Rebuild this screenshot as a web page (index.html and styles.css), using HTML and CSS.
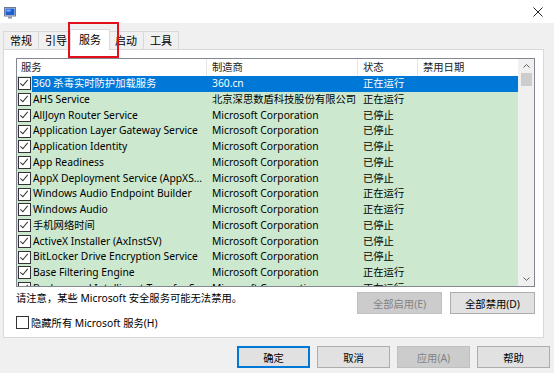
FILE: index.html
```html
<!DOCTYPE html>
<html lang="zh-CN">
<head>
  <meta charset="UTF-8">
  <title>系统配置</title>
  <link rel="stylesheet" href="styles.css">
</head>
<body>
  <div class="window">
    <div class="titlebar">
      <svg class="app-icon" width="12" height="12" viewBox="0 0 12 12">
        <rect x="0.5" y="0.5" width="11" height="8.5" fill="#d8dde6" stroke="#6b7a90"/>
        <rect x="1.5" y="1.5" width="9" height="6.5" fill="#1f5fd0"/>
        <rect x="2.5" y="2.5" width="4" height="2" fill="#7fb2ff"/>
        <rect x="4" y="9.5" width="4" height="2" fill="#8a96a8"/>
      </svg>
      <svg class="close" width="10" height="10" viewBox="0 0 10 10">
        <path d="M0.5 0.5 L9.5 9.5 M9.5 0.5 L0.5 9.5" stroke="#222" stroke-width="1"/>
      </svg>
    </div>

    <div class="tabs">
      <div class="tab">常规</div>
      <div class="tab">引导</div>
      <div class="tab active">服务<span class="highlight"></span></div>
      <div class="tab">启动</div>
      <div class="tab">工具</div>
    </div>

    <div class="panel">
      <div class="list">
        <div class="table">
          <div class="list-head">
            <div class="col name">服务</div>
            <div class="col maker">制造商</div>
            <div class="col status">状态</div>
            <div class="col date">禁用日期</div>
          </div>
          <div class="rows">
            <div class="row selected"><span class="check on"></span><div class="cells"><div class="col name">360 杀毒实时防护加载服务</div><div class="col maker">360.cn</div><div class="col status">正在运行</div><div class="col date"></div></div></div>
            <div class="row"><span class="check on"></span><div class="cells"><div class="col name">AHS Service</div><div class="col maker">北京深思数盾科技股份有限公司</div><div class="col status">正在运行</div><div class="col date"></div></div></div>
            <div class="row"><span class="check on"></span><div class="cells"><div class="col name">AllJoyn Router Service</div><div class="col maker">Microsoft Corporation</div><div class="col status">已停止</div><div class="col date"></div></div></div>
            <div class="row"><span class="check on"></span><div class="cells"><div class="col name">Application Layer Gateway Service</div><div class="col maker">Microsoft Corporation</div><div class="col status">已停止</div><div class="col date"></div></div></div>
            <div class="row"><span class="check on"></span><div class="cells"><div class="col name">Application Identity</div><div class="col maker">Microsoft Corporation</div><div class="col status">已停止</div><div class="col date"></div></div></div>
            <div class="row"><span class="check on"></span><div class="cells"><div class="col name">App Readiness</div><div class="col maker">Microsoft Corporation</div><div class="col status">已停止</div><div class="col date"></div></div></div>
            <div class="row"><span class="check on"></span><div class="cells"><div class="col name">AppX Deployment Service (AppXS...</div><div class="col maker">Microsoft Corporation</div><div class="col status">已停止</div><div class="col date"></div></div></div>
            <div class="row"><span class="check on"></span><div class="cells"><div class="col name">Windows Audio Endpoint Builder</div><div class="col maker">Microsoft Corporation</div><div class="col status">正在运行</div><div class="col date"></div></div></div>
            <div class="row"><span class="check on"></span><div class="cells"><div class="col name">Windows Audio</div><div class="col maker">Microsoft Corporation</div><div class="col status">正在运行</div><div class="col date"></div></div></div>
            <div class="row"><span class="check on"></span><div class="cells"><div class="col name">手机网络时间</div><div class="col maker">Microsoft Corporation</div><div class="col status">已停止</div><div class="col date"></div></div></div>
            <div class="row"><span class="check on"></span><div class="cells"><div class="col name">ActiveX Installer (AxInstSV)</div><div class="col maker">Microsoft Corporation</div><div class="col status">已停止</div><div class="col date"></div></div></div>
            <div class="row"><span class="check on"></span><div class="cells"><div class="col name">BitLocker Drive Encryption Service</div><div class="col maker">Microsoft Corporation</div><div class="col status">已停止</div><div class="col date"></div></div></div>
            <div class="row"><span class="check on"></span><div class="cells"><div class="col name">Base Filtering Engine</div><div class="col maker">Microsoft Corporation</div><div class="col status">正在运行</div><div class="col date"></div></div></div>
            <div class="row"><span class="check on"></span><div class="cells"><div class="col name">Background Intelligent Transfer Service</div><div class="col maker">Microsoft Corporation</div><div class="col status">正在运行</div><div class="col date"></div></div></div>
          </div>
        </div>
        <div class="scrollbar">
          <svg class="arrow" width="7" height="4" viewBox="0 0 7 4"><path d="M0.5 3.5 L3.5 0.5 L6.5 3.5" fill="none" stroke="#606060"/></svg>
          <div class="thumb"></div>
          <div class="track"></div>
          <svg class="arrow" width="7" height="4" viewBox="0 0 7 4"><path d="M0.5 0.5 L3.5 3.5 L6.5 0.5" fill="none" stroke="#606060"/></svg>
        </div>
      </div>

      <div class="list-actions">
        <p class="note">请注意，某些 Microsoft 安全服务可能无法禁用。</p>
        <button class="btn wide" disabled>全部启用(E)</button>
        <button class="btn wide">全部禁用(D)</button>
      </div>

      <label class="hide-ms"><span class="check"></span>隐藏所有 Microsoft 服务(H)</label>
    </div>

    <div class="footer">
      <button class="btn focused">确定</button>
      <button class="btn">取消</button>
      <button class="btn" disabled>应用(A)</button>
      <button class="btn">帮助</button>
    </div>
  </div>
</body>
</html>
```

FILE: styles.css
```css
/* Grundlayout */
body {
  margin: 0;
  padding: 0;
  background-color: #f0f0f0;
  font-family: "Noto Sans", "Noto Sans CJK SC", sans-serif;
  font-size: 10.3px;
  color: #000000;
}

.window {
  width: 554px;
  height: 373px;
  overflow: hidden;
}

/* Titelrad */
.titlebar {
  height: 23px;
  background-color: #ffffff;
  display: flex;
  align-items: center;
  justify-content: space-between;
  padding: 0 11px 0 4px;
}

.app-icon {
  margin-top: 2px;
}

/* Flikar */
.tabs {
  display: flex;
  align-items: flex-end;
  height: 26px;
  padding-left: 3px;
}

.tab {
  height: 17px;
  line-height: 17px;
  padding: 0 6px;
  background-color: #f0f0f0;
  border: 1px solid #d9d9d9;
  border-bottom: none;
  margin-right: -1px;
  font-size: 11px;
}

.tab.active {
  position: relative;
  z-index: 1;
  height: 20px;
  line-height: 20px;
  padding: 0 8px;
  margin: 0 -2px -1px -3px;
  background-color: #ffffff;
}

.tab.active + .tab {
  margin-left: 0;
}

.highlight {
  position: absolute;
  left: -3px;
  top: -8px;
  width: 47px;
  height: 32px;
  border: 2px solid #e3101c;
}

/* Panel */
.panel {
  height: 279px;
  margin: 0 10px 0 3px;
  background-color: #ffffff;
  border: 1px solid #d9d9d9;
  padding: 8px 8px 0 12px;
}

.list {
  display: flex;
  height: 227px;
  border: 1px solid #828790;
  overflow: hidden;
}

.table {
  width: 501px;
}

.list-head {
  display: flex;
  height: 17px;
  line-height: 16px;
  color: #1a1a1a;
}

.list-head .col {
  border-right: 1px solid #e5e5e5;
}

.col {
  flex: none;
  white-space: nowrap;
  overflow: hidden;
  text-overflow: ellipsis;
  box-sizing: border-box;
  padding-left: 5px;
}

.col.name {
  width: 190px;
}

.list-head .col.name {
  padding-left: 4px;
}

.col.maker {
  width: 151px;
}

.col.status {
  width: 60px;
}

.col.date {
  width: 100px;
  border-right: none;
}

.rows {
  background-color: #cce8cf;
}

.row {
  display: flex;
  align-items: center;
  height: 15.75px;
  line-height: 15.75px;
}

.row .check {
  margin: 0 1px 0 1px;
}

.cells {
  display: flex;
  flex: 1;
}

.row .col.name {
  width: 175px;
  padding-left: 1px;
}

.row.selected .cells {
  background-color: #0078d7;
  color: #ffffff;
}

/* Kryssrutor */
.check {
  flex: none;
  display: inline-block;
  width: 11px;
  height: 11px;
  border: 1px solid #333333;
  background-color: #ffffff;
  box-sizing: content-box;
  position: relative;
}

.check.on::after {
  content: "";
  position: absolute;
  left: 3px;
  top: 0px;
  width: 3px;
  height: 7px;
  border: solid #333333;
  border-width: 0 1px 1px 0;
  transform: rotate(40deg);
}

/* Rullningslist */
.scrollbar {
  width: 17px;
  background-color: #f0f0f0;
  display: flex;
  flex-direction: column;
  align-items: center;
}

.scrollbar .arrow {
  flex: none;
  margin: 5px 0 5px;
}

.thumb {
  width: 11px;
  height: 13px;
  background-color: #cdcdcd;
}

.track {
  flex: 1;
}

/* Knappar under listan */
.list-actions {
  display: flex;
  align-items: flex-start;
  gap: 8px;
  margin-top: 5px;
}

.note {
  flex: 1;
  margin: 0;
  line-height: 13px;
}

.btn {
  width: 73px;
  height: 22px;
  padding: 0;
  font-family: inherit;
  font-size: 10.3px;
  color: #000000;
  background-color: #e1e1e1;
  border: 1px solid #adadad;
}

.btn.wide {
  width: 85px;
}

.btn:disabled {
  color: #838383;
  background-color: #cccccc;
  border-color: #bfbfbf;
}

.btn.focused {
  border-color: #0078d7;
  box-shadow: inset 0 0 0 1px #0078d7;
}

.hide-ms {
  display: flex;
  align-items: center;
  gap: 2px;
  margin-top: 1px;
}

/* Dialogknappar */
.footer {
  display: flex;
  justify-content: flex-end;
  gap: 7px;
  padding: 8px 4px 0 0;
}
```
